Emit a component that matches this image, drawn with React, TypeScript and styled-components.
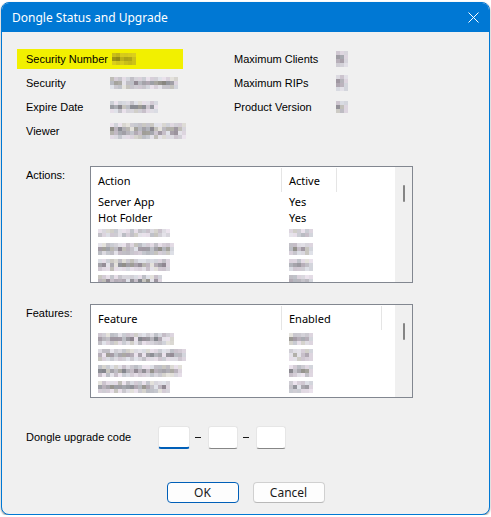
import React from "react";
import styled, { createGlobalStyle, css } from "styled-components";

const GlobalStyle = createGlobalStyle`
  html, body {
    margin: 0;
    padding: 0;
    background: #ffffff;
  }
  body {
    font-family: "Liberation Sans", Arial, sans-serif;
    color: #000;
  }
`;

const Window = styled.div`
  box-sizing: border-box;
  margin: 2px 1px 0 1px;
  width: 489px;
  height: 513px;
  border: 1px solid #0078d4;
  border-radius: 8px;
  overflow: hidden;
  background: #f0f0f0;
  display: flex;
  flex-direction: column;
  box-shadow: 0 1px 2px rgba(0, 0, 0, 0.45);
`;

const TitleBar = styled.div`
  height: 29px;
  flex: none;
  background: #0078d4;
  display: flex;
  align-items: center;
  justify-content: space-between;
  padding-left: 10px;
`;

const Title = styled.span`
  font-family: "Noto Sans", "Open Sans", sans-serif;
  font-size: 12px;
  color: #ffffff;
`;

const CloseButton = styled.div`
  width: 30px;
  height: 29px;
  margin-right: 1px;
  display: flex;
  align-items: center;
  justify-content: center;
`;

const Body = styled.div`
  flex: 1;
  display: flex;
  flex-direction: column;
  padding: 17px 15px 0 15px;
`;

const InfoGrid = styled.div`
  display: grid;
  grid-template-columns: 166px 1fr;
  column-gap: 42px;
  row-gap: 4px;
`;

const InfoCell = styled.div<{ $highlight?: boolean }>`
  height: 20px;
  display: flex;
  align-items: center;
  padding: 0 9px;
  font-size: 11px;
  ${(p) =>
    p.$highlight &&
    css`
      background: #f2f000;
    `}
`;

const InfoLabel = styled.span<{ $width: number }>`
  width: ${(p) => p.$width}px;
  flex: none;
  white-space: nowrap;
`;

const ListSection = styled.div<{ $top: number }>`
  display: grid;
  grid-template-columns: 64px 323px;
  padding-left: 9px;
  margin-top: ${(p) => p.$top}px;
`;

const SectionLabel = styled.span`
  font-size: 11px;
  padding-top: 3px;
`;

const ListBox = styled.div<{ $height: number }>`
  box-sizing: border-box;
  height: ${(p) => p.$height}px;
  border: 1px solid #828790;
  background: #ffffff;
  display: flex;
  overflow: hidden;
`;

const ListContent = styled.div`
  flex: 1;
  display: flex;
  flex-direction: column;
  overflow: hidden;
  font-family: "Noto Sans", "Open Sans", sans-serif;
  font-size: 11px;
`;

const HeaderRow = styled.div`
  height: 26px;
  flex: none;
  display: flex;
`;

const HeaderCell = styled.div<{ $width: number }>`
  box-sizing: border-box;
  width: ${(p) => p.$width}px;
  flex: none;
  display: flex;
  align-items: center;
  padding-left: 7px;
  margin: 1px 0 1px;
  border-right: 1px solid #e5e5e5;
`;

const Row = styled.div`
  height: 16px;
  flex: none;
  display: flex;
  align-items: center;
`;

const Cell = styled.div<{ $width: number }>`
  box-sizing: border-box;
  width: ${(p) => p.$width}px;
  flex: none;
  padding-left: 7px;
  display: flex;
  align-items: center;
  white-space: nowrap;
`;

const ScrollTrack = styled.div`
  width: 17px;
  flex: none;
  background: #f0f0f0;
  display: flex;
  justify-content: center;
  padding-top: 18px;
  box-sizing: border-box;
`;

const ScrollThumb = styled.div`
  width: 2px;
  height: 17px;
  border-radius: 1px;
  background: #858585;
`;

const CodeRow = styled.div`
  display: flex;
  align-items: center;
  padding-left: 9px;
  margin-top: 28px;
`;

const CodeLabel = styled.span`
  width: 132px;
  flex: none;
  font-size: 11px;
  margin-top: -2px;
`;

const CodeInput = styled.input<{ $width: number; $focused?: boolean }>`
  box-sizing: border-box;
  width: ${(p) => p.$width}px;
  height: 23px;
  border: 1px solid #e6e6e6;
  border-bottom: 1px solid #868686;
  border-radius: 3px;
  background: #ffffff;
  outline: none;
  padding: 0 4px;
  ${(p) =>
    p.$focused &&
    css`
      border-bottom: 2px solid #005fb8;
    `}
`;

const Dash = styled.span`
  width: 6px;
  height: 1px;
  margin: 0 7px 0 5px;
  background: #1a1a1a;
`;

const Footer = styled.div`
  display: flex;
  justify-content: center;
  gap: 14px;
  margin-top: 33px;
`;

const Button = styled.button<{ $primary?: boolean }>`
  box-sizing: border-box;
  width: 72px;
  height: 21px;
  padding: 0;
  border-radius: 4px;
  background: #fdfdfd;
  font-family: "Noto Sans", "Open Sans", sans-serif;
  font-size: 12px;
  color: #1a1a1a;
  border: 1px solid #d0d0d0;
  border-bottom-color: #b8b8b8;
  ${(p) =>
    p.$primary &&
    css`
      border: 1px solid #005fb8;
    `}
`;

const MosaicGrid = styled.span<{ $cols: number }>`
  display: inline-grid;
  grid-template-columns: repeat(${(p) => p.$cols}, 4px);
  grid-auto-rows: 4px;
`;

const Pixel = styled.span``;

// 가려진 값 (모자이크 처리)
function Mosaic({ cols, rows, seed, tint = "gray" }: { cols: number; rows: number; seed: number; tint?: "gray" | "yellow" }) {
  let s = seed * 7919 + 104729;
  const rand = () => {
    s = (s * 9301 + 49297) % 233280;
    return s / 233280;
  };
  const cells = [];
  for (let r = 0; r < rows; r++) {
    for (let c = 0; c < cols; c++) {
      const edge = r === 0 || r === rows - 1;
      let light = edge ? 190 + rand() * 40 : 135 + rand() * 65;
      if (c === cols - 1) light = Math.max(light, 215);
      if (rand() < 0.08) light = 228;
      const v = Math.round(light);
      let color: string;
      if (tint === "yellow") {
        // 노란 배경 위에 섞인 올리브 톤
        color = `rgb(${Math.round(v * 0.95)}, ${Math.round(v * 0.9)}, ${Math.round(v * 0.12)})`;
      } else {
        const t = rand();
        const dr = t < 0.3 ? 6 : t < 0.55 ? -4 : 0;
        const db = t < 0.3 ? 8 : t > 0.85 ? -8 : 5;
        color = `rgb(${v + dr}, ${v - 2}, ${Math.min(255, v + db)})`;
      }
      cells.push(<Pixel key={`${r}-${c}`} style={{ background: color }} />);
    }
  }
  return <MosaicGrid $cols={cols}>{cells}</MosaicGrid>;
}

type Column = { title: string; width: number };

function ListView({
  columns,
  rows,
  height,
}: {
  columns: Column[];
  rows: React.ReactNode[][];
  height: number;
}) {
  return (
    <ListBox $height={height}>
      <ListContent>
        <HeaderRow>
          {columns.map((col) => (
            <HeaderCell key={col.title} $width={col.width}>
              {col.title}
            </HeaderCell>
          ))}
        </HeaderRow>
        {rows.map((row, i) => (
          <Row key={i}>
            {row.map((cell, j) => (
              <Cell key={j} $width={columns[j].width}>
                {cell}
              </Cell>
            ))}
          </Row>
        ))}
      </ListContent>
      <ScrollTrack>
        <ScrollThumb />
      </ScrollTrack>
    </ListBox>
  );
}

function CloseIcon() {
  return (
    <svg width="11" height="11" viewBox="0 0 11 11">
      <path d="M0.5 0.5 L10.5 10.5 M10.5 0.5 L0.5 10.5" stroke="#ffffff" strokeWidth="1" fill="none" />
    </svg>
  );
}

export default function App() {
  const actionRows: React.ReactNode[][] = [
    ["Server App", "Yes"],
    ["Hot Folder", "Yes"],
    [<Mosaic cols={18} rows={2} seed={11} />, <Mosaic cols={6} rows={2} seed={12} />],
    [<Mosaic cols={19} rows={3} seed={13} />, <Mosaic cols={6} rows={3} seed={14} />],
    [<Mosaic cols={18} rows={3} seed={15} />, <Mosaic cols={6} rows={3} seed={16} />],
    [<Mosaic cols={16} rows={3} seed={17} />, <Mosaic cols={6} rows={3} seed={18} />],
  ];

  const featureRows: React.ReactNode[][] = [
    [<Mosaic cols={19} rows={3} seed={21} />, <Mosaic cols={6} rows={3} seed={22} />],
    [<Mosaic cols={22} rows={3} seed={23} />, <Mosaic cols={6} rows={3} seed={24} />],
    [<Mosaic cols={21} rows={3} seed={25} />, <Mosaic cols={6} rows={3} seed={26} />],
    [<Mosaic cols={18} rows={3} seed={27} />, <Mosaic cols={6} rows={3} seed={28} />],
  ];

  return (
    <>
      <GlobalStyle />
      <Window>
        <TitleBar>
          <Title>Dongle Status and Upgrade</Title>
          <CloseButton>
            <CloseIcon />
          </CloseButton>
        </TitleBar>
        <Body>
          <InfoGrid>
            <InfoCell $highlight>
              <InfoLabel $width={86}>Security Number</InfoLabel>
              <Mosaic cols={6} rows={3} seed={1} tint="yellow" />
            </InfoCell>
            <InfoCell>
              <InfoLabel $width={102}>Maximum Clients</InfoLabel>
              <Mosaic cols={3} rows={4} seed={2} />
            </InfoCell>
            <InfoCell>
              <InfoLabel $width={84}>Security</InfoLabel>
              <Mosaic cols={17} rows={3} seed={3} />
            </InfoCell>
            <InfoCell>
              <InfoLabel $width={102}>Maximum RIPs</InfoLabel>
              <Mosaic cols={3} rows={4} seed={4} />
            </InfoCell>
            <InfoCell>
              <InfoLabel $width={84}>Expire Date</InfoLabel>
              <Mosaic cols={12} rows={3} seed={5} />
            </InfoCell>
            <InfoCell>
              <InfoLabel $width={102}>Product Version</InfoLabel>
              <Mosaic cols={3} rows={3} seed={6} />
            </InfoCell>
            <InfoCell>
              <InfoLabel $width={84}>Viewer</InfoLabel>
              <Mosaic cols={19} rows={4} seed={7} />
            </InfoCell>
          </InfoGrid>

          <ListSection $top={25}>
            <SectionLabel>Actions:</SectionLabel>
            <ListView
              height={117}
              columns={[
                { title: "Action", width: 191 },
                { title: "Active", width: 55 },
              ]}
              rows={actionRows}
            />
          </ListSection>

          <ListSection $top={21}>
            <SectionLabel>Features:</SectionLabel>
            <ListView
              height={94}
              columns={[
                { title: "Feature", width: 191 },
                { title: "Enabled", width: 100 },
              ]}
              rows={featureRows}
            />
          </ListSection>

          <CodeRow>
            <CodeLabel>Dongle upgrade code</CodeLabel>
            <CodeInput $width={32} $focused />
            <Dash />
            <CodeInput $width={30} />
            <Dash />
            <CodeInput $width={30} />
          </CodeRow>

          <Footer>
            <Button $primary>OK</Button>
            <Button>Cancel</Button>
          </Footer>
        </Body>
      </Window>
    </>
  );
}
